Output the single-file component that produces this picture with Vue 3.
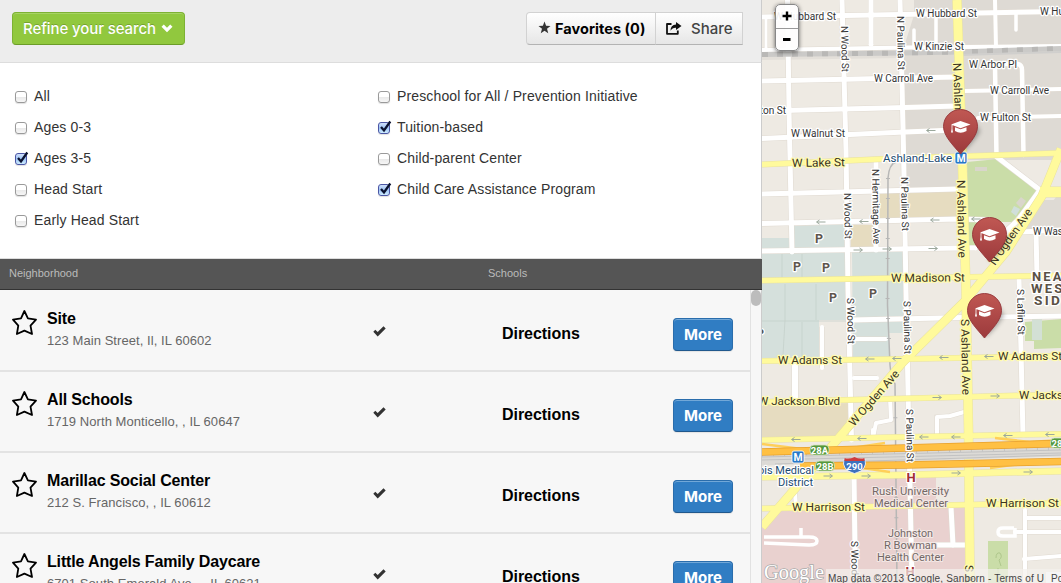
<script setup>
const leftFilters = [
  { label: 'All', on: false },
  { label: 'Ages 0-3', on: false },
  { label: 'Ages 3-5', on: true },
  { label: 'Head Start', on: false },
  { label: 'Early Head Start', on: false },
]
const rightFilters = [
  { label: 'Preschool for All / Prevention Initiative', on: false },
  { label: 'Tuition-based', on: true },
  { label: 'Child-parent Center', on: false },
  { label: 'Child Care Assistance Program', on: true },
]
const columns = [leftFilters, rightFilters]
const schools = [
  { name: 'Site', address: '123 Main Street, Il, IL 60602' },
  { name: 'All Schools', address: '1719 North Monticello, , IL 60647' },
  { name: 'Marillac Social Center', address: '212 S. Francisco, , IL 60612' },
  { name: 'Little Angels Family Daycare', address: '6701 South Emerald Ave., , IL 60621' },
]

const whiteRoads = [
  ['M762 17 L900 14.5 L1061 11.500', 5], ['M762 50 L905 47.500 L1061 46', 4],
  ['M762 81 L905 78 L957 77', 5], ['M964 91 L1061 89', 4],
  ['M762 111 L905 107.500 L957 106', 5], ['M978 118 L1061 116', 4],
  ['M762 138.500 L905 132 L955 130', 5], ['M762 194 L957 189', 5],
  ['M762 223.500 L960 219 L990 220', 5], ['M1000 233 L1061 230', 5],
  ['M762 251 L960 248 L975 248', 5], ['M852 320 L963 317.500 L1061 316', 5],
  ['M787.500 0 L789 110 L792 252', 5], ['M795 358 L795 400', 6],
  ['M871 0 L871 44', 5], ['M766 20 L766 48', 3],
  ['M842 0 L846 150 L848 290 L851.500 440', 5], ['M854 480 L855.500 583', 5],
  ['M876 160 L876 250', 5],
  ['M900 0 L903.500 150 L906 290 L909 440 L912 583', 5],
  ['M914 30 L914 48', 3.500], ['M936 18 L936 48', 3.500],
  ['M995 0 L996 48', 4], ['M995 66 L996.500 157', 4.500],
  ['M1016 14 L1016 30', 3.500], ['M984 64 L1018 64 Q1022 65 1022 70 L1023.500 155', 4.500],
  ['M997 157 L1040 190 L1018 220 L1006 231', 5], ['M1036 231 L1037 276', 5],
  ['M1019 279 L1021 350 L1023 435', 5],
  ['M822 327 L822 368', 4], ['M854 339 L886 339', 4], ['M854 378 L877 378', 4],
  ['M890 398 L891 420 L876 423 L873 438', 4],
  ['M937 436 L937 417 L950 416 L964 412', 4],
  ['M951 507 L953 545', 5], ['M914 545 L967 545', 5],
  ['M1025 510 L1025 583', 4], ['M1025 518 L1061 518', 4],
  ['M1015 532 L1061 532', 4], ['M1024 559 L1061 556', 4],
  ['M795 493 L796 507', 4], ['M873 430 L873 436', 4], ['M937 430 L937 436', 4],
]
const yellowRoads = [
  ['M762 164.500 L905 158 L1061 153', 5], ['M762 280.500 L905 278 L1061 275.500', 5],
  ['M762 361 L905 359 L1061 356', 5], ['M762 402 L905 398.500 L1061 394.500', 5],
  ['M762 440 L905 437 L1061 434', 5], ['M762 477 L905 475 L1061 471', 6],
  ['M762 508.500 L905 506 L1061 503', 5],
  ['M1061 149 L1042 196 L1006 252 L965 301 L903 362 L843 433 L762 527', 8],
  ['M1040 192 L1061 192', 10],
  ['M957 0 L962 150 L966 290 L968.500 430 L970 583', 8.500],
]
const oneWay = [
  [821, 222, 0], [864, 221.500, 0], [935, 220, 0], [976, 219, 0], [858, 250, 1], [887, 249, 1], [933, 248.500, 1],
  [870, 359, 0], [897, 358.500, 0], [944, 357.500, 0], [989, 356.500, 0], [937, 397.500, 1], [995, 396, 1],
  [796, 439.500, 0], [862, 438.500, 0], [924, 437, 0], [956, 437, 0], [1008, 435.500, 0], [1050, 434.500, 0],
  [828, 476, 1], [866, 476, 1], [956, 473, 1], [1028, 472, 1], [931, 130.500, 0],
]
// [text, x, baseline, rotation, length, size, kind]
const labels = [
  ['W Hubbard St', 774, 20, 0, 62, 10, ''], ['W Hubbard St', 916, 17, 0, 61, 10, ''],
  ['W Hubbard St', 1040, 15, 0, 61, 10, ''], ['W Kinzie St', 914, 49.500, 0, 50, 10, ''],
  ['W Arbor Pl', 969, 67.500, 0, 48, 10, ''], ['W Carroll Ave', 874, 82, 0, 59, 10, ''],
  ['W Carroll Ave', 990, 93.500, 0, 59, 10, ''], ['W Fulton St', 980, 121, 0, 51, 10, ''],
  ['W Fulton St', 735, 113.500, 0, 51, 10, ''], ['W Walnut St', 791, 137, 0, 54, 10, ''],
  ['W Lake St', 792, 167, -1, 53, 11.500, 'major'], ['W Madison St', 891, 282, -0.500, 74, 11.500, 'major'],
  ['W Adams St', 778, 364, 0, 64, 11.500, 'major'], ['W Adams St', 998, 360, 0, 64, 11.500, 'major'],
  ['W Jackson Blvd', 758, 405, 0, 82, 11.500, 'major'], ['W Jackson Blvd', 1019, 399, 0, 82, 11.500, 'major'],
  ['W Harrison St', 792, 511, 0, 73, 11.500, 'major'], ['W Harrison St', 986, 507, 0, 73, 11.500, 'major'],
  ['W Washington', 1033, 235, 0, 62, 10, ''],
  ['N Wood St', 841, 26, 89, 46, 10, ''], ['N Paulina St', 897, 16, 89, 54, 10, ''],
  ['N Wood St', 844, 193, 89, 46, 10, ''], ['N Hermitage Ave', 872, 169, 89, 75, 10, ''],
  ['N Paulina St', 901, 177, 89, 54, 10, ''],
  ['S Wood St', 847, 298, 89, 46, 10, ''], ['S Paulina St', 903.500, 301, 89, 53, 10, ''],
  ['S Paulina St', 906, 409, 89, 53, 10, ''], ['S Laflin St', 1017, 289, 89, 46, 10, ''],
  ['S Wood St', 851, 541, 89, 46, 10, ''],
  ['N Ashland Ave', 953, 63, 88, 76, 11.500, 'major'], ['N Ashland Ave', 957, 180, 89, 78, 11.500, 'major'],
  ['S Ashland Ave', 961, 319, 89, 76, 11.500, 'major'], ['S Ashland Ave', 965, 565, 89, 76, 11.500, 'major'],
  ['W Ogden Ave', 854, 427, -49, 70, 11.500, 'major'], ['N Ogden Ave', 995, 266, -55, 66, 11.500, 'major'],
  ['Ashland-Lake', 883, 162, 0, 69, 11, 'transit'],
  ['Illinois Medical', 741, 474, 0, 73, 11, 'transit'], ['District', 778, 486, 0, 35, 11, 'transit'],
  ['Rush University', 872, 495, 0, 77, 10.500, 'place'], ['Medical Center', 874, 507, 0, 74, 10.500, 'place'],
  ['Johnston', 888, 537, 0, 45, 10.500, 'place'], ['R Bowman', 884, 549, 0, 53, 10.500, 'place'],
  ['Health Center', 877, 561, 0, 67, 10.500, 'place'],
  ['NEAR', 1032, 281, 0, 42, 12, 'area'], ['WEST', 1031, 293, 0, 44, 12, 'area'],
  ['SIDE', 1034, 305, 0, 38, 12, 'area'],
  ['P', 815, 243, 0, 8, 12, 'park'], ['P', 793, 271, 0, 8, 12, 'park'], ['P', 822, 272, 0, 8, 12, 'park'],
  ['P', 829, 302, 0, 8, 12, 'park'], ['P', 869, 298, 0, 8, 12, 'park'], ['P', 756, 338, 0, 8, 12, 'park'],
]
const pins = [[943, 109], [972, 217], [967, 293]]
</script>

<template>
  <div class="page">
    <main class="panel">
      <header class="toolbar">
        <button class="btn refine">
          <span>Refine your search</span>
          <svg width="12" height="9" viewBox="0 0 12 9"><path d="M0.500 2.800 L2.800 0.500 L6 3.700 L9.200 0.500 L11.500 2.800 L6 8.300Z" fill="#fff" /></svg>
        </button>
        <div class="group">
          <button class="btn fav">
            <svg width="13" height="13" viewBox="0 0 26 26"><path d="M13 1 L16.200 9.700 L25 10 L18 15.400 L20.500 24.500 L13 19.300 L5.500 24.500 L8 15.400 L1 10 L9.800 9.700Z" fill="#333" /></svg>
            <span>Favorites (0)</span>
          </button>
          <button class="btn share">
            <svg width="16" height="13" viewBox="0 0 16 13"><path d="M5.500 2 H1 V11.800 H11.800 V8.500" fill="none" stroke="#111" stroke-width="1.800" stroke-linejoin="round" /><path d="M10 0 L15.500 4 L10 8 V5.700 Q6.500 5.400 4.500 8.800 Q4.500 2.500 10 2.400Z" fill="#111" /></svg>
            <span>Share</span>
          </button>
        </div>
      </header>

      <section class="filters">
        <div v-for="(col, c) in columns" :key="c" class="col">
          <label v-for="f in col" :key="f.label" class="filter">
            <span class="box" :class="{ on: f.on }">
              <svg v-if="f.on" width="14" height="14" viewBox="0 0 14 14"><path d="M3 7 L6 10.500 L12.300 1.500" fill="none" stroke="#0b1230" stroke-width="2.300" /></svg>
            </span>
            <span>{{ f.label }}</span>
          </label>
        </div>
      </section>

      <div class="thead"><span>Neighborhood</span><span>Schools</span></div>

      <section class="results">
        <div class="rows">
          <article v-for="s in schools" :key="s.name" class="row">
            <svg class="star" width="26" height="27" viewBox="0 0 26 27"><path d="M12.400 2 L15.900 9.400 L24 10.700 L18.500 16.700 L20 25 L12.400 21.600 L4.900 25 L6.300 16.700 L1 10.700 L9 9.400Z" fill="none" stroke="#000" stroke-width="1.800" stroke-linejoin="round" /></svg>
            <div class="info"><h3>{{ s.name }}</h3><p>{{ s.address }}</p></div>
            <svg class="tick" width="13" height="11" viewBox="0 0 13 11"><path d="M0.300 5.800 L2.300 3.800 L4.700 5.900 L10.500 0.300 L12.700 2.500 L4.700 10.500Z" fill="#333" /></svg>
            <a class="dir">Directions</a>
            <button class="btn more">More</button>
          </article>
        </div>
        <div class="scroll"><i></i></div>
      </section>
    </main>

    <aside class="map">
      <svg width="299" height="583" viewBox="762 0 299 583">
        <defs>
          <linearGradient id="pin" x1="0" y1="0" x2="0" y2="1"><stop offset="0" stop-color="#c05853" /><stop offset="1" stop-color="#9c3a3c" /></linearGradient>
          <filter id="blur" x="-50%" y="-50%" width="200%" height="200%"><feGaussianBlur stdDeviation="2.500" /></filter>
        </defs>
        <rect x="762" y="0" width="299" height="583" fill="#eeeae3" />
        <path d="M903 50 L914 15 L1061 10 V190 L1035 226 L1061 228 V153 L968 155 L967 188 L906 190Z M914 0 H1061 V160 H914Z" fill="#dedad4" />
        <path d="M792 50 H903 V58 L762 60 V54Z" fill="#e3dfd9" />
        <path d="M1040 200 H1061 V229 H1020Z" fill="#dedad4" />
        <path d="M880 193 L960 189 V218 L880 220Z M851 225 H874 V248 H851Z M762 405 L851 403 V423 L840 438 H762Z" fill="#e6dcc0" />
        <path d="M794 226 L846 224 V248 L794 250Z M762 238 H790 V251 H762Z M762 254 L847 252 V320 H819 V358 H762Z M852 252 L903 250 V333 H889 V357 H853Z" fill="#d5e0dc" />
        <path d="M782 254 V280 M802 254 V280 M785 284 V320 L783 355 M802 322 V356 M816 284 V320 M762 321 H847" fill="none" stroke="#c3cec9" stroke-width="0.700" />
        <path d="M967 162 L998 159 L1038 192 L1012 222 L985 222 V247 H968Z M1025 322 L1061 319 V348 L1034 349 V341 H1025Z" fill="#cadda8" />
        <rect x="1032" y="319" width="10" height="21" fill="#d3e0d5" />
        <path d="M975 167 H987 V171 H975Z M1016 203 L1021 197 L1026 201 L1021 208Z" fill="#d9d6cb" />
        <path d="M1014 206 L1020 209 L1016 216 L1011 212Z" fill="#d0dfda" />
        <path d="M857 479 L936 477 V505 H967 V583 H762 V527 L778 511 L853 509Z" fill="#e9d1cf" />
        <rect x="988" y="541" width="20" height="42" fill="#cadda8" />
        <path d="M998 583 V568 M996 558 Q996 552 1000 553 Q1003 557 999 560 L1001 566" fill="none" stroke="#afc78c" />
        <path v-for="(r, i) in whiteRoads" :key="'wc' + i" :d="r[0]" fill="none" stroke="#e0dad1" :stroke-width="r[1] + 1" />
        <path v-for="(r, i) in whiteRoads" :key="'w' + i" :d="r[0]" fill="none" stroke="#fff" stroke-linecap="round" stroke-linejoin="round" :stroke-width="r[1]" />
        <g fill="none">
          <path d="M762 54.500 L905 53 L960 52 L1061 48.500" stroke="#cbcac8" stroke-width="5" />
          <path d="M762 54.500 L905 53 L960 52 L1061 48.500" stroke="#b9b8b6" stroke-width="5" stroke-dasharray="6 9" />
          <path d="M960 55 L1061 52" stroke="#d0cfcd" stroke-width="2" />
        </g>
        <path d="M764 537 H809 Q817 537 817 541 Q817 545 809 545 L764 543 M801 528 V537 M1014 528 H1003 Q998 528 998 532 Q998 536 1003 536 H1015 V528" fill="none" stroke="#fff" stroke-width="3.500" />
        <path d="M896 162 Q889 164 888 178 L887.500 305 L890 365 Q891 378 895 384 L897 583" fill="none" stroke="#b7b7b6" stroke-width="1.500" />
        <path d="M888 178 L887.500 305 L890 365 L895 384 L897 583" fill="none" stroke="#b7b7b6" stroke-width="4" stroke-dasharray="1 19" />
        <path v-for="(r, i) in yellowRoads" :key="'yc' + i" :d="r[0]" fill="none" stroke="#e9e2a0" :stroke-width="r[1] + 1" />
        <path v-for="(r, i) in yellowRoads" :key="'y' + i" :d="r[0]" fill="none" stroke="#fffa9c" :stroke-width="r[1]" />
        <g fill="none">
          <path d="M762 460 L1061 451" stroke="#dcdad6" stroke-width="11" />
          <path d="M762 457 L1061 450 M762 460 L1061 453 M775 464 L1061 455" stroke="#c2c2c2" stroke-width="1" />
          <path d="M762 455 L1061 448" stroke="#c5c5c5" stroke-width="4" stroke-dasharray="1 10" />
          <path d="M762 444 L810 450 M885 443 L845 449 M995 438 L1030 442 L1061 440 M835 464 L890 472 M990 468 L1020 464" stroke="#ffcf58" stroke-width="2.500" />
          <path d="M762 452 L905 448 L1061 443.500 M800 466 L905 465 L1061 461.500" stroke="#e7a02d" stroke-width="7.500" />
          <path d="M762 452 L905 448 L1061 443.500 M800 466 L905 465 L1061 461.500" stroke="#ffc043" stroke-width="6" />
        </g>
        <path v-for="(a, i) in oneWay" :key="'a' + i" d="M-4.500 0 H4 M1.500 -2 L4.500 0 L1.500 2" fill="none" stroke="#9ba89c" stroke-width="1" :transform="`translate(${a[0]} ${a[1]}) scale(${a[2] ? 1 : -1} 1)`" />

        <text v-for="(l, i) in labels" :key="'l' + i" :class="['lbl', l[6]]" :font-size="l[5]" :textLength="l[4]" lengthAdjust="spacingAndGlyphs" :transform="`translate(${l[1]} ${l[2]}) rotate(${l[3]})`">{{ l[0] }}</text>

        <g v-for="(m, i) in [[955, 152], [792, 451]]" :key="'m' + i" :transform="`translate(${m[0]} ${m[1]})`">
          <rect width="12" height="12" rx="2" fill="#2878c8" stroke="#fff" stroke-width="0.800" />
          <text class="badge" x="6" y="9.800" font-size="10.500">M</text>
        </g>
        <text class="hosp" x="911" y="482" font-size="13">H</text>
        <text class="hosp" x="910" y="576" font-size="13">H</text>
        <g v-for="(e, i) in [['28A', 819.5, 450], ['28B', 825, 466], ['28C', 1060, 443]]" :key="'e' + i">
          <rect :x="e[1] - 9.500" :y="e[2] - 5" width="19" height="10" rx="4" fill="#55983d" stroke="#d7e7bf" stroke-width="0.800" />
          <text class="badge" :x="e[1]" :y="e[2] + 3.500" font-size="9.500">{{ e[0] }}</text>
        </g>
        <path d="M844 459 Q849 460 854.500 457.500 Q860 460 865 459 Q868 470 854.500 473.500 Q841 470 844 459Z" fill="#3d71bd" stroke="#fff" stroke-width="0.800" />
        <path d="M844.500 458 Q849 459.500 854.500 457 Q860 459.500 864.500 458 V461 H844.500Z" fill="#ce3d3d" />
        <text class="badge" x="854.500" y="469.500" font-size="9.500">290</text>

        <g v-for="(p, i) in pins" :key="'p' + i" :transform="`translate(${p[0]} ${p[1]})`">
          <path d="M18 44 Q30 34 37 22 L30 12 L14 25Z" fill="#000" opacity="0.350" filter="url(#blur)" />
          <path d="M17.500 0.500 A17 17 0 0 1 34.500 17.500 C34.500 27 25 36 17.500 45 C10 36 0.500 27 0.500 17.500 A17 17 0 0 1 17.500 0.500Z" fill="url(#pin)" stroke="#943338" stroke-width="0.900" />
          <path d="M8 15.600 L17.500 12 L27.500 15.600 L17.500 19.200Z M12 18.200 L17.500 20.200 L23.500 18.200 V22 Q17.500 25.500 12 22Z M8.600 16 H9.400 V20 L10 23.500 H8 L8.600 20Z" fill="#fff" />
        </g>

        <rect x="826" y="569" width="235" height="14" fill="#f3f1ed" opacity="0.700" />
        <rect x="1046" y="572" width="15" height="11" fill="#f5f5f5" />
        <text class="google" x="764" y="578.500" font-size="20" textLength="60" lengthAdjust="spacingAndGlyphs">Google</text>
        <text class="credit" x="828" y="582" font-size="10" textLength="216" lengthAdjust="spacing">Map data ©2013 Google, Sanborn - Terms of U</text>
        <text class="credit" x="1051" y="582" font-size="10">Po</text>
      </svg>
      <div class="zoomer">
        <button aria-label="Zoom in"><svg width="10" height="10" viewBox="0 0 10 10"><path d="M5 0.500 V9.500 M0.500 5 H9.500" stroke="#000" stroke-width="2.400" /></svg></button>
        <button aria-label="Zoom out"><svg width="10" height="10" viewBox="0 0 10 10"><path d="M1 5.500 H8.500" stroke="#000" stroke-width="3" /></svg></button>
      </div>
    </aside>
  </div>
</template>

<style>
html, body { margin: 0; overflow: hidden; }
</style>
<style scoped>
.page { display: flex; width: 1061px; height: 583px; overflow: hidden; font-family: "Liberation Sans", Arial, sans-serif; color: #333; }
.panel { width: 762px; flex: none; display: flex; flex-direction: column; }
.toolbar { height: 50px; background: #ededed; border-bottom: 1px solid #ddd; border-right: 1.500px solid #ccc; display: flex; justify-content: space-between; align-items: flex-start; padding: 12px 18px 0 12px; }
.btn { box-sizing: border-box; height: 33px; font-family: Inter, sans-serif; font-size: 15px; display: flex; align-items: center; padding: 0 0 1px; margin: 0; white-space: nowrap; }
.refine { width: 173px; background: #91c83e; border: 1px solid #7db233; border-bottom-color: #6b9c28; border-radius: 4px; color: #fff; padding-left: 10px; gap: 5px; font-weight: 500; text-shadow: 0 -1px 0 rgba(0,0,0,.2); box-shadow: inset 0 1px 0 rgba(255,255,255,.2); }
.refine span { width: 133px; letter-spacing: -0.100px; }
.group { display: flex; }
.fav, .share { background: linear-gradient(#fff, #e6e6e6); border: 1px solid #d2d2d2; border-bottom-color: #b3b3b3; }
.fav { width: 130px; border-radius: 4px 0 0 4px; padding-left: 11px; gap: 4px; font-weight: 700; color: #000; font-size: 14.500px; letter-spacing: 0.050px; }
.fav svg { margin-top: -2px; }
.share { width: 88px; margin-left: -1px; padding-left: 10px; gap: 9px; color: #444; font-weight: 500; }
.filters { height: 196px; box-sizing: border-box; background: #fff; border-right: 1.500px solid #ccc; border-bottom: 1px solid #ddd; display: grid; grid-template-columns: 363px 1fr; padding: 17px 0 0 15px; font-size: 14px; letter-spacing: 0.140px; }
.filter { height: 31px; display: flex; align-items: center; gap: 7px; white-space: nowrap; }
.box { position: relative; width: 12px; height: 12px; box-sizing: border-box; border: 1px solid #9a9a9a; border-radius: 3px; background: linear-gradient(#fff 45%, #e9e9e9 50%, #f6f6f6); margin-top: 2px; box-shadow: 0 1px 1px rgba(0,0,0,.12); }
.box.on { border-color: #4b56a5; background: linear-gradient(#cfdffa, #9fc5f5 50%, #cdecff); }
.box svg { position: absolute; left: -1px; top: -3px; }
.thead { height: 31px; box-sizing: border-box; background: #555; border-bottom: 1px solid #333; display: grid; grid-template-columns: 479px 1fr; padding: 8px 0 0 9px; font-size: 11px; line-height: 13px; color: #bbb; }
.results { flex: 1; min-height: 0; overflow: hidden; display: flex; background: #f7f7f7; border-right: 1px solid #ccc; }
.rows { flex: none; width: 750px; border-right: 1px solid #e2e2e2; padding-top: 1px; }
.row { height: 79px; border-bottom: 2px solid #e3e3e3; display: grid; grid-template-columns: 35px 326px 129px 171px 60px; padding-left: 12px; align-items: start; }
.star { margin-top: 18px; }
.tick { margin-top: 35px; }
.info { padding-top: 18px; }
h3 { margin: 0; font-size: 16px; line-height: 20px; font-weight: 700; color: #000; letter-spacing: -0.150px; white-space: nowrap; }
p { margin: 3px 0 0; font-size: 13px; line-height: 17px; color: #666; letter-spacing: 0.060px; white-space: nowrap; }
.dir { margin-top: 34px; font-size: 16px; line-height: 18px; font-weight: 700; color: #000; letter-spacing: -0.050px; }
.more { width: 60px; margin-top: 27px; justify-content: center; background: #307dc3; border: 1px solid #2a6dac; border-bottom-color: #20588d; border-radius: 4px; color: #fff; font-weight: 700; box-shadow: inset 0 1px 0 #72a8d8, 0 1px 1px rgba(0,0,0,.08); }
.scroll { width: 10px; display: flex; justify-content: center; }
.scroll i { width: 10px; height: 16px; border-radius: 5px; background: #bcbcbc; }
.map { position: relative; width: 299px; overflow: hidden; }
.map > svg { display: block; }
.lbl { font-family: Roboto, sans-serif; fill: #333; stroke: #fff; stroke-width: 2.500px; paint-order: stroke; stroke-linejoin: round; }
.major { fill: #3b3420; stroke: #fffbb0; }
.transit { fill: #1b4b71; }
.place { fill: #736866; stroke: #f4e8e6; stroke-width: 2px; }
.area { fill: #5a5146; font-weight: 700; letter-spacing: 2px; }
.park { fill: #5d554e; font-weight: 700; }
.badge { fill: #fff; font-family: Roboto, sans-serif; font-weight: 700; text-anchor: middle; }
.hosp { fill: #a12e34; stroke: #fff; stroke-width: 2px; paint-order: stroke; font-family: Roboto, sans-serif; font-weight: 700; text-anchor: middle; }
.google { font-family: "Liberation Serif", serif; fill: #fff; stroke: #aaa; stroke-width: 1.500px; paint-order: stroke; }
.credit { fill: #444; font-family: "Liberation Sans", sans-serif; }
.zoomer { position: absolute; left: 13px; top: 4px; width: 24px; height: 47px; box-sizing: border-box; border: 1px solid #888; border-radius: 5px; overflow: hidden; background: rgba(255,255,255,.9); box-shadow: 0 1px 4px rgba(0,0,0,.6); }
.zoomer button { display: flex; align-items: center; justify-content: center; box-sizing: border-box; width: 22px; height: 22.500px; padding: 0; border: 0; background: none; }
.zoomer button + button { border-top: 1px solid #999; }
</style>
